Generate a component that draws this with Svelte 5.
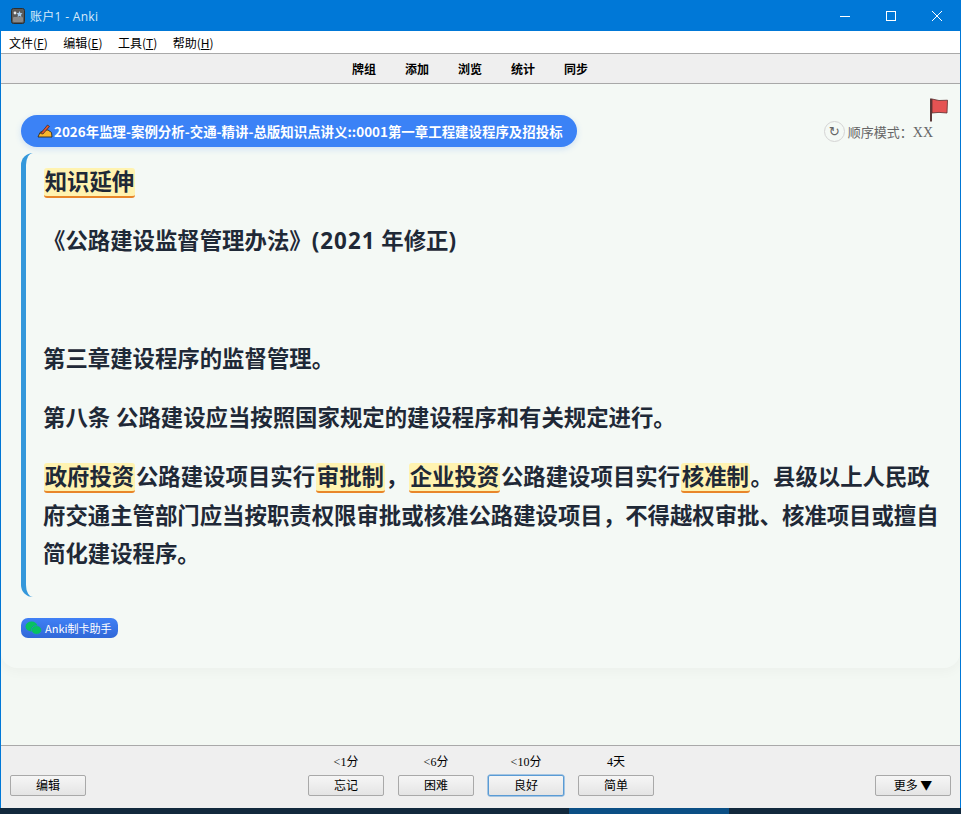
<script>
	const menus = [
		{ label: '文件', key: 'F' },
		{ label: '编辑', key: 'E' },
		{ label: '工具', key: 'T' },
		{ label: '帮助', key: 'H' }
	];
	const links = ['牌组', '添加', '浏览', '统计', '同步'];
	const answers = [
		{ label: '忘记', time: '<1分' },
		{ label: '困难', time: '<6分' },
		{ label: '良好', time: '<10分', focus: true },
		{ label: '简单', time: '4天' }
	];
</script>

<div class="window">
	<header class="titlebar">
		<svg class="app-icon" width="16" height="16" viewBox="0 0 16 16">
			<rect x="1.5" y="0.5" width="13" height="15" rx="2" fill="#5a5a5a" stroke="#2e2e2e" />
			<rect x="3" y="9" width="10" height="5" rx="1" fill="#8a8a8a" />
			<path d="M9.500 3l.9 2 2.100.3-1.500 1.500.4 2.100-1.900-1-1.900 1 .4-2.100-1.500-1.500 2.100-.3z" fill="#a9cdec" />
			<circle cx="5" cy="5" r="1.400" fill="#e8e8e8" />
		</svg>
		<span class="title">账户1 - Anki</span>
		<div class="win-controls">
			<svg width="12" height="12" viewBox="0 0 12 12"><path d="M1 6.500h10" stroke="#fff" /></svg>
			<svg width="12" height="12" viewBox="0 0 12 12"><rect x="1.500" y="1.500" width="9" height="9" fill="none" stroke="#fff" /></svg>
			<svg width="12" height="12" viewBox="0 0 12 12"><path d="M1 1l10 10M11 1L1 11" stroke="#fff" /></svg>
		</div>
	</header>

	<nav class="menubar">
		{#each menus as m}
			<span>{m.label}(<u>{m.key}</u>)</span>
		{/each}
	</nav>

	<nav class="toolbar">
		{#each links as link}
			<span>{link}</span>
		{/each}
	</nav>

	<main class="webview">
		<div class="card">
			<svg class="flag" width="22" height="24" viewBox="0 0 22 24">
				<path d="M2 0.500v23" stroke="#5b3a3a" stroke-width="2" />
				<path d="M3 1l7 1.500 8.500-.3-.5 12.800-8-.6-7 .6z" fill="#e55353" stroke="#5c2f2f" stroke-width="0.800" />
			</svg>

			<div class="deck-row">
				<div class="deck-pill">
					<svg class="pencil" width="16" height="14" viewBox="0 0 16 14">
						<path d="M1 13l2-4.500 5-2.500h3l3.500 2.500.5 4.500z" fill="#f8b62c" stroke="#2d2a26" stroke-width="0.900" />
						<path d="M3.500 9.500L10.500 1l2 1.500L6 10z" fill="#e2542c" stroke="#2d2a26" stroke-width="0.700" />
					</svg>
					<span>2026年监理-案例分析-交通-精讲-总版知识点讲义::0001第一章工程建设程序及招投标</span>
				</div>
				<div class="mode">
					<span class="mode-icon">↻</span>
					<span class="mode-text">顺序模式：<span class="xx">XX</span></span>
				</div>
			</div>

			<article class="content">
				<p><mark>知识延伸</mark></p>
				<p>《公路建设监督管理办法》<span class="num">(2021</span> 年修正)</p>
				<p class="gap">第三章建设程序的监督管理。</p>
				<p>第八条 公路建设应当按照国家规定的建设程序和有关规定进行。</p>
				<p><mark>政府投资</mark>公路建设项目实行<mark>审批制</mark>，<mark>企业投资</mark>公路建设项目实行<mark>核准制</mark>。县级以上人民政府交通主管部门应当按职责权限审批或核准公路建设项目，不得越权审批、核准项目或擅自简化建设程序。</p>
			</article>

			<div class="helper">
				<svg width="17" height="14" viewBox="0 0 17 14">
					<ellipse cx="6.500" cy="5.500" rx="6" ry="5" fill="#07c160" />
					<ellipse cx="11.500" cy="9" rx="5" ry="4.300" fill="#07c160" stroke="#3d74e4" stroke-width="0.600" />
				</svg>
				<span>Anki制卡助手</span>
			</div>
		</div>
	</main>

	<footer class="bottombar">
		<button class="btn">编辑</button>
		<div class="answers">
			{#each answers as a}
				<div class="answer">
					<span class="time">{a.time}</span>
					<button class="btn" class:focus={a.focus}>{a.label}</button>
				</div>
			{/each}
		</div>
		<button class="btn">更多 ▼</button>
	</footer>

	<div class="taskbar">
		<div class="task-active"></div>
	</div>
</div>

<style>
	:global(body) {
		margin: 0;
		background: #12293d;
	}

	.window {
		width: 961px;
		height: 814px;
		display: flex;
		flex-direction: column;
		overflow: hidden;
		font-family: "Noto Sans CJK SC", sans-serif;
		color: #000;
		background: #0078d7;
	}

	.titlebar {
		height: 31px;
		flex-shrink: 0;
		background: #0078d7;
		color: #fff;
		display: flex;
		align-items: center;
		padding-left: 10px;
		font-size: 12px;
	}

	.app-icon {
		margin-right: 4px;
	}

	.title {
		color: #d8ebfa;
		font-family: "Open Sans", "Noto Sans CJK SC", sans-serif;
		letter-spacing: 0.300px;
	}

	.win-controls {
		margin-left: auto;
		display: flex;
		gap: 34px;
		padding-right: 18px;
		align-items: center;
	}

	.menubar {
		height: 22px;
		flex-shrink: 0;
		background: #fff;
		border-bottom: 1px solid #a9a9a9;
		margin: 0 1px;
		display: flex;
		align-items: center;
		gap: 15.500px;
		padding-left: 8px;
		font-size: 12px;
	}

	.toolbar {
		height: 29px;
		flex-shrink: 0;
		background: #efefef;
		border-bottom: 1px solid #a9a9a9;
		margin: 0 1px;
		display: flex;
		align-items: center;
		justify-content: center;
		gap: 29px;
		padding-right: 21px;
		font-size: 12px;
		font-weight: 700;
	}

	.webview {
		flex: 1;
		min-height: 0;
		background: #f3f8f3;
		margin: 0 1px;
		border-bottom: 1px solid #a9a9a9;
	}

	.card {
		position: relative;
		height: 584px;
		box-sizing: border-box;
		padding: 31px 20px 0;
		background: #f4f9f5;
		border-radius: 0 0 16px 16px;
		box-shadow: 0 4px 12px rgba(0, 0, 0, 0.03);
	}

	.flag {
		position: absolute;
		top: 14px;
		right: 9px;
	}

	.deck-row {
		display: flex;
		justify-content: space-between;
		align-items: center;
	}

	.deck-pill {
		height: 32px;
		display: flex;
		align-items: center;
		gap: 1px;
		padding: 0 14px 0 16px;
		background: #3b82f6;
		border-radius: 16px;
		color: #fff;
		font-size: 13.450px;
		font-weight: 700;
		box-shadow: 0 2px 6px rgba(59, 130, 246, 0.2);
	}

	.mode {
		display: flex;
		align-items: center;
		gap: 3px;
		font-size: 13px;
		color: #666;
		padding-right: 7px;
		margin-top: 1px;
	}

	.mode-icon {
		width: 19px;
		height: 19px;
		border: 1.500px solid #d4d4d4;
		border-radius: 50%;
		display: flex;
		align-items: center;
		justify-content: center;
		font-size: 13px;
		font-family: "DejaVu Sans", sans-serif;
	}

	.xx {
		font-family: "Liberation Serif", serif;
		font-size: 14px;
	}

	.content {
		margin-top: 6px;
		height: 444px;
		box-sizing: border-box;
		padding: 10px 0 0 17px;
		border-left: 5px solid #3498db;
		border-radius: 12px;
		font-family: "Open Sans", "Noto Sans CJK SC", sans-serif;
		font-size: 22.400px;
		font-weight: 700;
		line-height: 38.500px;
		color: #1f2937;
	}

	.content p {
		margin: 0 0 20.500px;
	}

	.content .gap {
		margin-top: 79.500px;
	}

	.num {
		letter-spacing: 1px;
	}

	mark {
		display: inline-block;
		line-height: 28px;
		background: #fff3b0;
		color: inherit;
		border-bottom: 2px solid #e8862a;
		border-radius: 3px;
		padding: 0 1px;
		margin: 0 0.700px;
	}

	.helper {
		width: 97px;
		height: 20px;
		margin-top: 21px;
		box-sizing: border-box;
		display: flex;
		align-items: center;
		gap: 3px;
		padding-left: 4px;
		color: #fff;
		font-size: 11px;
		border-radius: 7px;
		background: linear-gradient(#4080f5, #3068d8);
	}

	.bottombar {
		height: 62px;
		flex-shrink: 0;
		margin: 0 1px;
		background: #efefef;
		box-sizing: border-box;
		display: flex;
		justify-content: space-between;
		align-items: flex-end;
		padding: 0 9px 12px;
	}

	.answers {
		display: flex;
		gap: 14px;
		margin-left: 1px;
	}

	.answer {
		display: flex;
		flex-direction: column;
		align-items: center;
		gap: 5px;
	}

	.time {
		font-size: 12px;
		font-family: "Liberation Serif", "Noto Sans CJK SC", serif;
		line-height: 16px;
	}

	.btn {
		width: 76px;
		height: 21px;
		padding: 0 0 2px;
		box-sizing: border-box;
		font-family: "Noto Sans CJK SC", sans-serif;
		font-size: 12px;
		color: #000;
		border: 1px solid #a9a9a9;
		border-radius: 2px;
		background: linear-gradient(#f6f6f6, #e4e4e4);
	}

	.btn.focus {
		border: 1px solid #5a9bd5;
		box-shadow: 0 0 0 0.500px #5a9bd5;
	}

	.taskbar {
		height: 6px;
		flex-shrink: 0;
		background: #12293d;
		position: relative;
	}

	.task-active {
		position: absolute;
		left: 569px;
		top: 0;
		width: 160px;
		height: 6px;
		background: #0b4f85;
	}
</style>
